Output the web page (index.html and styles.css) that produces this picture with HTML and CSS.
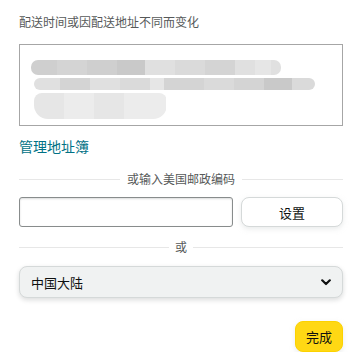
FILE: index.html
```html
<!DOCTYPE html>
<html lang="zh-CN">
<head>
<meta charset="utf-8">
<link rel="stylesheet" href="styles.css">
</head>
<body>
<div class="page">
  <div class="note">配送时间或因配送地址不同而变化</div>
  <div class="addr">
    <div class="blur-row r1">
      <span class="b g1" style="width:26px"></span><span class="b g2" style="width:30px"></span><span class="b g1" style="width:30px"></span><span class="b g3" style="width:28px"></span><span class="b g5" style="width:30px"></span><span class="b g4" style="width:30px"></span><span class="b g2" style="width:30px"></span><span class="b g5" style="width:20px"></span><span class="b g6" style="width:16px"></span><span class="b g5" style="width:10px"></span>
    </div>
    <div class="blur-row r2">
      <span class="b g5" style="width:26px"></span><span class="b g2" style="width:30px"></span><span class="b g5" style="width:30px"></span><span class="b g4" style="width:30px"></span><span class="b g6" style="width:14px"></span><span class="b g2" style="width:40px"></span><span class="b g4" style="width:30px"></span><span class="b g2" style="width:30px"></span><span class="b g3" style="width:28px"></span><span class="b g4" style="width:23px"></span>
    </div>
    <div class="blur-row r3">
      <span class="b g6" style="width:30px"></span><span class="b g7" style="width:30px"></span><span class="b g6" style="width:30px"></span><span class="b g7" style="width:42px"></span>
    </div>
  </div>
  <a class="link" href="#">管理地址簿</a>
  <div class="divider"><span>或输入美国邮政编码</span></div>
  <div class="zip-row">
    <input class="zip" type="text">
    <button class="btn-set">设置</button>
  </div>
  <div class="divider or"><span>或</span></div>
  <div class="select">
    <span>中国大陆</span>
    <svg class="chev" width="10" height="7" viewBox="0 0 10 7"><path d="M1.2 1.3 L5 5 L8.8 1.3" fill="none" stroke="#0f1111" stroke-width="2.2" stroke-linecap="round" stroke-linejoin="round"/></svg>
  </div>
  <div class="actions">
    <button class="btn-done">完成</button>
  </div>
</div>
</body>
</html>
```

FILE: styles.css
```css
html, body { margin: 0; padding: 0; background: #fff; }
body {
  font-family: "Noto Sans CJK SC", "Noto Sans", sans-serif;
  color: #0f1111;
}
.page {
  padding: 13px 20px 0 19px;
  display: flex;
  flex-direction: column;
}
.note {
  font-size: 12px;
  line-height: 18px;
  color: #565959;
}
.addr {
  margin-top: 13px;
  height: 82px;
  box-sizing: border-box;
  border: 1px solid #a6a6a6;
  padding: 15px 0 0 11px;
  display: flex;
  flex-direction: column;
}
.blur-row {
  display: flex;
  overflow: hidden;
  border-radius: 7px;
}
.blur-row .b { display: block; height: 100%; }
.r1 { height: 15px; width: 250px; }
.r2 { height: 12px; width: 281px; margin-top: 3px; margin-left: 3px; }
.r3 { height: 26px; width: 133px; margin-top: 3px; margin-left: 3px; border-radius: 8px 8px 14px 14px; }
.g1 { background: #cfcfcf; }
.g2 { background: #d4d4d4; }
.g3 { background: #c9c9c9; }
.g4 { background: #dadada; }
.g5 { background: #e0e0e0; }
.g6 { background: #e6e6e6; }
.g7 { background: #ececec; }
.link {
  margin-top: 10px;
  font-size: 14px;
  line-height: 20px;
  color: #007185;
  text-decoration: none;
  align-self: flex-start;
}
.divider {
  margin-top: 15px;
  display: flex;
  align-items: center;
  font-size: 12px;
  line-height: 16px;
  color: #565959;
}
.divider::before, .divider::after {
  content: "";
  flex: 1;
  border-top: 1px solid #e7e7e7;
}
.divider span { padding: 0 7px; }
.zip-row {
  margin-top: 10px;
  display: flex;
  gap: 8px;
}
.zip {
  flex: 0 0 214px;
  height: 30px;
  box-sizing: border-box;
  border: 1px solid #888c8c;
  border-radius: 3px;
  margin: 0;
  padding: 0 8px;
  box-shadow: 0 1px 2px rgba(15,17,17,.15) inset;
  font: inherit;
}
.btn-set {
  flex: 1;
  height: 30px;
  box-sizing: border-box;
  background: #fff;
  border: 1px solid #d5d9d9;
  border-radius: 8px;
  box-shadow: 0 2px 5px rgba(213,217,217,.5);
  font-family: inherit;
  font-size: 13px;
  color: #0f1111;
  padding: 0;
}
.or { margin-top: 12px; }
.or span { padding: 0 6px; }
.select {
  margin-top: 11px;
  height: 32px;
  box-sizing: border-box;
  background: #f0f2f2;
  border: 1px solid #d5d9d9;
  border-radius: 8px;
  box-shadow: 0 2px 5px rgba(15,17,17,.15);
  display: flex;
  align-items: center;
  justify-content: space-between;
  padding: 0 11px 0 11px;
  font-size: 13px;
}
.chev { display: block; }
.actions {
  margin-top: 23px;
  display: flex;
  justify-content: flex-end;
}
.btn-done {
  width: 48px;
  height: 31px;
  box-sizing: border-box;
  background: #ffd814;
  border: 1px solid #fcd200;
  border-radius: 8px;
  box-shadow: 0 2px 5px rgba(213,217,217,.5);
  font-family: inherit;
  font-size: 13px;
  color: #0f1111;
  padding: 0;
}
```
